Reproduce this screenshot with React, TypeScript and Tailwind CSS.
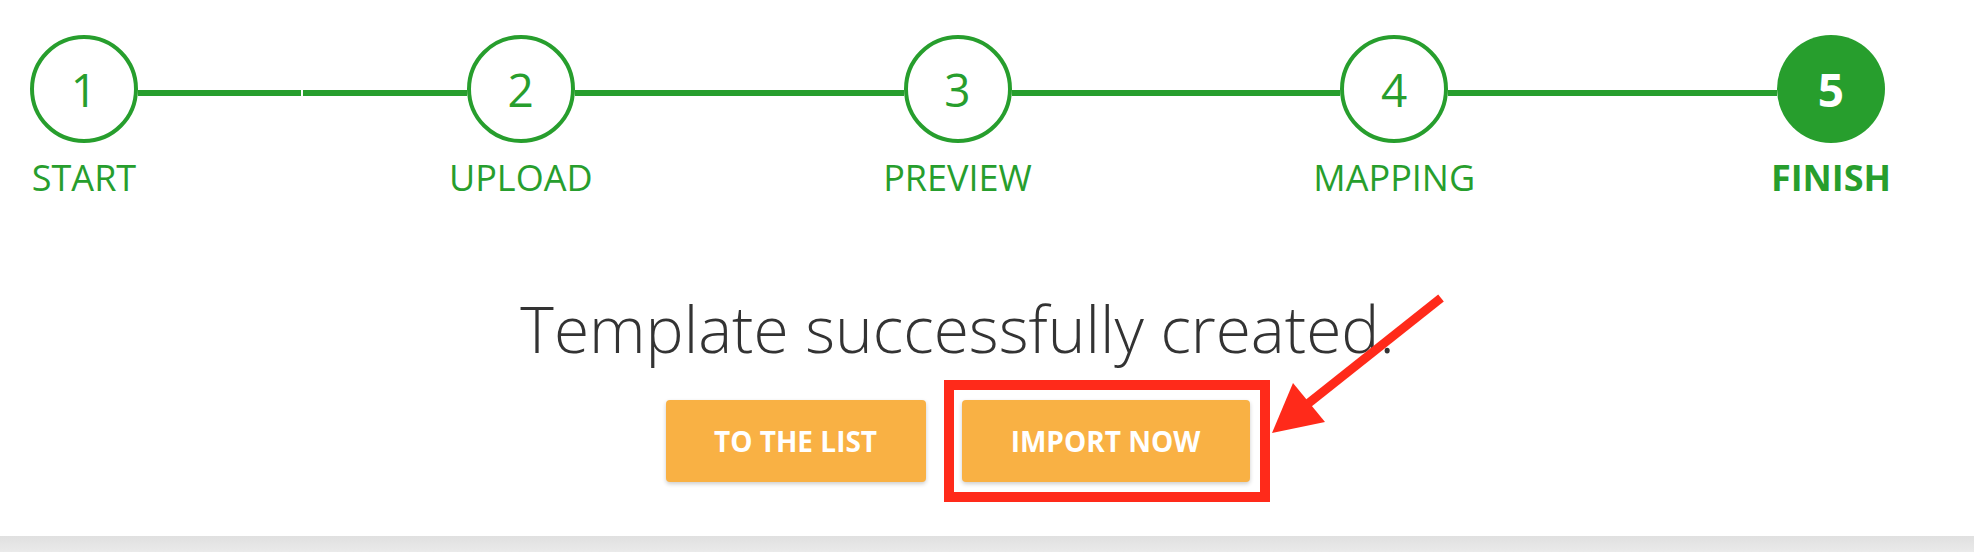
import React from "react";

const steps = [
  { n: 1, label: "START" },
  { n: 2, label: "UPLOAD" },
  { n: 3, label: "PREVIEW" },
  { n: 4, label: "MAPPING" },
  { n: 5, label: "FINISH", active: true },
];

function Step({ n, label, active }: { n: number; label: string; active?: boolean }) {
  return (
    <div className="flex flex-col items-center w-[108px] shrink-0">
      <div
        className={
          active
            ? "w-[108px] h-[108px] rounded-full bg-[#279e2d] text-white flex items-center justify-center text-[46px] font-bold leading-none"
            : "w-[108px] h-[108px] rounded-full border-4 border-[#279e2d] bg-white text-[#279e2d] flex items-center justify-center text-[46px] leading-none"
        }
      >
        {n}
      </div>
      <div
        className={
          "mt-[17px] whitespace-nowrap text-[36px] leading-[36px] text-[#279e2d] " +
          (active ? "font-bold" : "font-normal")
        }
      >
        {label}
      </div>
    </div>
  );
}

function Connector({ split }: { split?: boolean }) {
  if (split) {
    return (
      <div className="flex-1 mt-[55px] h-[6px] flex gap-[2px]">
        <div className="flex-1 bg-[#279e2d]" />
        <div className="flex-1 bg-[#279e2d]" />
      </div>
    );
  }
  return <div className="flex-1 mt-[55px] h-[6px] bg-[#279e2d]" />;
}

export default function App() {
  return (
    <div
      className="relative w-[1974px] h-[552px] bg-white overflow-hidden"
      style={{ fontFamily: '"Open Sans", "Liberation Sans", sans-serif' }}
    >
      <div className="h-[536px] pl-[30px] pr-[89px] pt-[35px] flex flex-col">
        <div className="flex items-start">
          {steps.map((s, i) => (
            <React.Fragment key={s.n}>
              {i > 0 && <Connector split={i === 1} />}
              <Step n={s.n} label={s.label} active={s.active} />
            </React.Fragment>
          ))}
        </div>

        <h1 className="mt-[100px] text-center text-[64px] leading-[66px] font-light text-[#333333]">
          Template successfully created.
        </h1>

        <div className="mt-[38px] flex justify-center gap-[36px]">
          <button className="w-[260px] h-[82px] rounded-[4px] bg-[#f9b144] text-white text-[28px] font-bold shadow-[0_2px_4px_rgba(0,0,0,0.2)]">
            TO THE LIST
          </button>
          <div className="relative">
            <button className="w-[288px] h-[82px] rounded-[4px] bg-[#f9b144] text-white text-[28px] font-bold shadow-[0_2px_4px_rgba(0,0,0,0.2)]">
              IMPORT NOW
            </button>
            <div className="absolute -left-[18px] -right-[20px] -top-[20px] -bottom-[20px] border-[10px] border-[#ff2a1a] pointer-events-none" />
          </div>
        </div>
      </div>

      <div className="h-[16px] bg-gradient-to-b from-[#e0e0e0] to-[#eaeaea]" />

      <svg className="absolute left-0 top-0 pointer-events-none" width="1974" height="552">
        <line x1="1441" y1="298" x2="1305" y2="406" stroke="#ff2a1a" strokeWidth="9" />
        <polygon points="1272,433 1293,383 1325,422" fill="#ff2a1a" />
      </svg>
    </div>
  );
}
